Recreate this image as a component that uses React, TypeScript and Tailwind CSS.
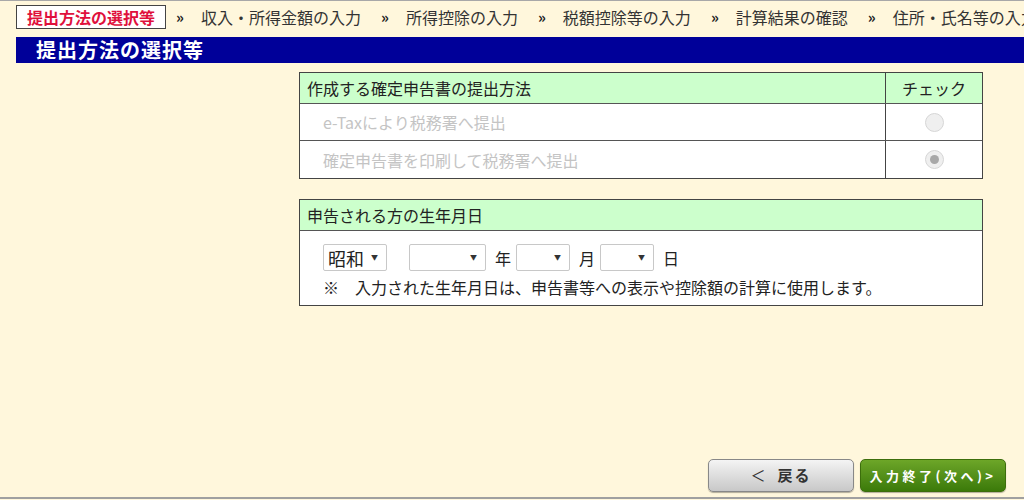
const font = { fontFamily: '"Noto Sans CJK JP", "Noto Sans", sans-serif' };

const steps = ['収入・所得金額の入力', '所得控除の入力', '税額控除等の入力', '計算結果の確認', '住所・氏名等の入力'];

function Select({ label, width }: { label?: string; width: string }) {
  return (
    <div className={`${width} h-[27px] flex items-center justify-between border border-[#c8c8c8] rounded-[2px] bg-white pl-[4px] pr-[8px]`}>
      <span className="text-[18px] text-[#222] leading-none">{label ?? ''}</span>
      <span className="text-[7px] text-[#333] leading-none">▼</span>
    </div>
  );
}

function Radio({ checked }: { checked?: boolean }) {
  return (
    <div className="w-[19px] h-[19px] rounded-full border border-[#d6d6d6] bg-[#efefef] flex items-center justify-center">
      {checked && <div className="w-[9px] h-[9px] rounded-full bg-[#a8a8a8]" />}
    </div>
  );
}

export default function App() {
  return (
    <div className="w-[1024px] h-[500px] bg-[#fff7dc] border-t border-[#a8a8a8] flex flex-col overflow-hidden" style={font}>
      {/* steps */}
      <div className="flex items-center pl-[16px] pt-[4px] whitespace-nowrap text-[16px] text-[#333]">
        <div className="h-[24px] px-[10px] border border-[#444] bg-white text-[#e0103c] font-bold flex items-center leading-none">
          提出方法の選択等
        </div>
        {steps.map((s, i) => (
          <div key={s} className="flex items-center">
            <span className={`${i === 0 ? 'ml-[10px]' : 'ml-[20px]'} mr-[17px] text-[15px] font-bold text-[#222]`}>»</span>
            <span>{s}</span>
          </div>
        ))}
      </div>

      {/* title bar */}
      <div className="ml-[16px] mt-[8px] h-[26px] bg-[#000099] flex items-center pl-[20px]">
        <span className="text-white font-bold text-[20px] leading-none tracking-[1px]">提出方法の選択等</span>
      </div>

      {/* content */}
      <div className="ml-[299px] w-[684px] mt-[9px] flex flex-col gap-[20px] text-[16px]">
        <div className="border border-[#444] bg-white">
          <div className="flex h-[31px] bg-[#ccffcc] border-b border-[#555]">
            <div className="flex-1 flex items-center pl-[7px] text-[#222]">作成する確定申告書の提出方法</div>
            <div className="w-[97px] border-l border-[#444] flex items-center justify-center text-[#222]">チェック</div>
          </div>
          <div className="flex h-[37px] border-b border-[#555]">
            <div className="flex-1 flex items-center pl-[23px] text-[#c4c4c4]">e-Taxにより税務署へ提出</div>
            <div className="w-[97px] border-l border-[#444] flex items-center justify-center"><Radio /></div>
          </div>
          <div className="flex h-[37px]">
            <div className="flex-1 flex items-center pl-[23px] text-[#c4c4c4]">確定申告書を印刷して税務署へ提出</div>
            <div className="w-[97px] border-l border-[#444] flex items-center justify-center"><Radio checked /></div>
          </div>
        </div>

        <div className="border border-[#444] bg-white">
          <div className="flex h-[31px] items-center bg-[#ccffcc] border-b border-[#555] pl-[7px] text-[#222]">
            申告される方の生年月日
          </div>
          <div className="pl-[23px] pt-[13px] pb-[6px] text-[#222]">
            <div className="flex items-center">
              <Select label="昭和" width="w-[64px]" />
              <div className="w-[22px]" />
              <Select width="w-[77px]" />
              <span className="ml-[9px] mr-[5px]">年</span>
              <Select width="w-[54px]" />
              <span className="ml-[9px] mr-[5px]">月</span>
              <Select width="w-[54px]" />
              <span className="ml-[9px]">日</span>
            </div>
            <div className="mt-[4px] whitespace-nowrap">※　入力された生年月日は、申告書等への表示や控除額の計算に使用します。</div>
          </div>
        </div>
      </div>

      {/* buttons */}
      <div className="mt-auto flex justify-end gap-[6px] pr-[18px] pb-[5px]">
        <div className="w-[146px] h-[33px] rounded-[5px] border border-[#888] bg-gradient-to-b from-[#f4f4f4] to-[#c8c8c8] flex items-center justify-center text-[#333] text-[15px] font-bold tracking-[2px] shadow-[0_1px_1px_rgba(0,0,0,0.3)]">
          <span className="mr-[10px] font-normal">＜</span>戻る
        </div>
        <div className="w-[146px] h-[33px] rounded-[5px] border border-[#3c6e0c] bg-gradient-to-b from-[#6da628] to-[#3b7a09] flex items-center justify-center text-white text-[13px] font-bold tracking-[3.5px] shadow-[0_1px_1px_rgba(0,0,0,0.3)]">
          入力終了(次へ)&gt;
        </div>
      </div>
      <div className="h-[2px] bg-[#a0a0a0] mb-[1px]" />
    </div>
  );
}
